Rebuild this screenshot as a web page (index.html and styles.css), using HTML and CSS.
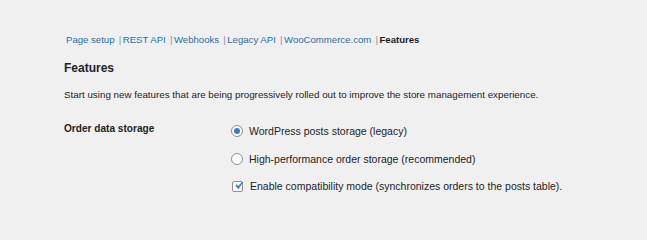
FILE: index.html
```html
<!DOCTYPE html>
<html lang="en">
<head>
<meta charset="utf-8">
<title>Features</title>
<link rel="stylesheet" href="styles.css">
</head>
<body>
<div class="wrap">
  <ul class="subnav">
    <li><a href="#">Page setup</a><span class="sep">|</span></li>
    <li><a href="#">REST API</a><span class="sep">|</span></li>
    <li><a href="#">Webhooks</a><span class="sep">|</span></li>
    <li><a href="#">Legacy API</a><span class="sep">|</span></li>
    <li><a href="#">WooCommerce.com</a><span class="sep">|</span></li>
    <li><span class="current">Features</span></li>
  </ul>
  <h2 class="title">Features</h2>
  <p class="desc">Start using new features that are being progressively rolled out to improve the store management experience.</p>
  <div class="form-row">
    <div class="label">Order data storage</div>
    <div class="options">
      <label class="option"><span class="radio checked"></span>WordPress posts storage (legacy)</label>
      <label class="option"><span class="radio"></span>High-performance order storage (recommended)</label>
      <label class="option opt-check"><span class="checkbox"><svg viewBox="0 0 20 20" width="15" height="15"><path d="M14.83 4.89l1.34.94-5.81 8.38H9.02L5.78 9.67l1.34-1.25 2.57 2.4z" fill="#3582c4"/></svg></span>Enable compatibility mode (synchronizes orders to the posts table).</label>
    </div>
  </div>
</div>
</body>
</html>
```

FILE: styles.css
```css
html, body {
  margin: 0;
  padding: 0;
  background: #f0f0f1;
}
body {
  font-family: "Liberation Sans", Arial, sans-serif;
  font-size: 9.8px;
  color: #1d2327;
  width: 647px;
  height: 220px;
  overflow: hidden;
}
.wrap {
  padding: 33px 0 0 64px;
}
.subnav {
  list-style: none;
  margin: 0 0 0 2px;
  padding: 0;
  display: flex;
  line-height: 14px;
  font-size: 9.6px;
}
.subnav li {
  display: flex;
}
.subnav a {
  color: #2271b1;
  text-decoration: none;
}
.sep {
  color: #8c8f94;
  margin: 0 1.5px 0 4.2px;
}
.current {
  font-weight: 700;
  color: #1d2327;
}
.title {
  margin: 13px 0 0;
  font-size: 12px;
  line-height: 16px;
  font-weight: 700;
}
.desc {
  margin: 12px 0 0;
  line-height: 14px;
}
.form-row {
  display: flex;
  margin-top: 22px;
}
.label {
  width: 167px;
  font-weight: 700;
  font-size: 10.1px;
  line-height: 10px;
}
.options {
  display: flex;
  flex-direction: column;
  gap: 13.5px;
  font-size: 10.5px;
}
.option {
  display: flex;
  align-items: center;
  line-height: 14px;
}
.radio {
  box-sizing: border-box;
  width: 12px;
  height: 12px;
  border: 1px solid #8c8f94;
  border-radius: 50%;
  background: #fff;
  margin-right: 6px;
  display: flex;
  align-items: center;
  justify-content: center;
}
.radio.checked::before {
  content: "";
  width: 6px;
  height: 6px;
  border-radius: 50%;
  background: #3582c4;
}
.checkbox {
  box-sizing: border-box;
  width: 11px;
  height: 11px;
  border: 1px solid #8c8f94;
  border-radius: 2px;
  background: #fff;
  margin: 0 7px 0 1px;
  display: flex;
  align-items: center;
  justify-content: center;
  overflow: visible;
}
.checkbox svg {
  flex: none;
  margin: -2px -3px 0 -2px;
}
```
